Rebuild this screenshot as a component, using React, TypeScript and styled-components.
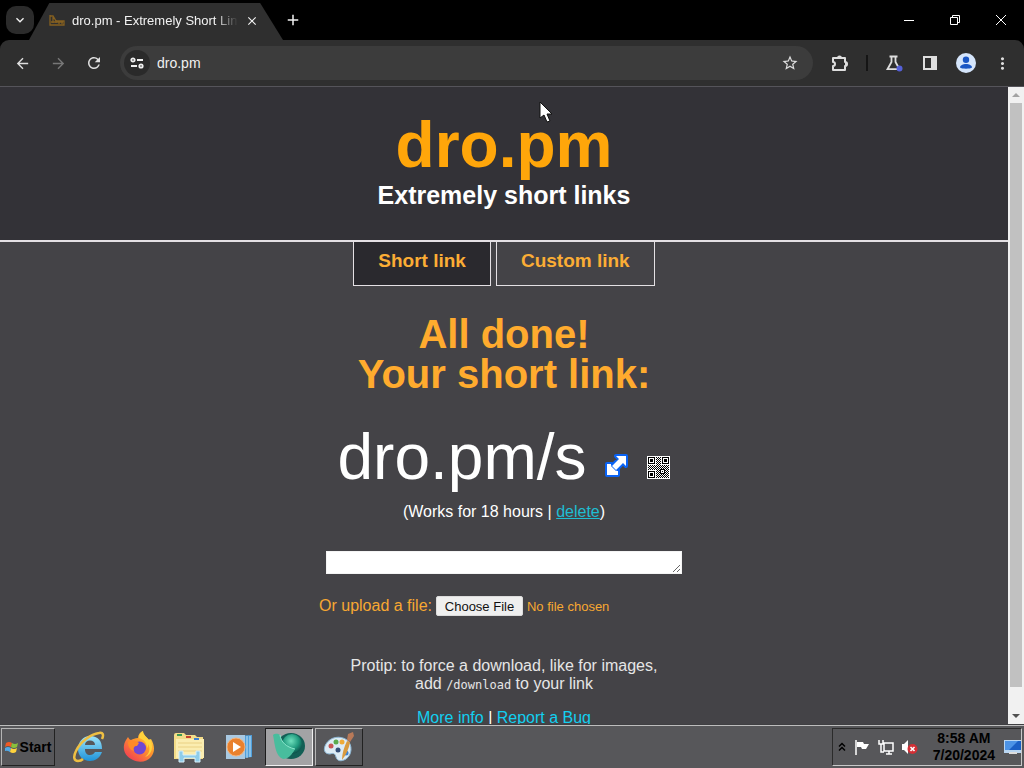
import React from "react";
import styled, { createGlobalStyle } from "styled-components";
import {
  MdAdd,
  MdArrowBack,
  MdArrowForward,
  MdClose,
  MdExpandMore,
  MdMoreVert,
  MdRefresh,
  MdStarBorder,
} from "react-icons/md";

const GlobalStyle = createGlobalStyle`
  * { box-sizing: border-box; }
  body {
    margin: 0;
    background: #444347;
    font-family: "Liberation Sans", Arial, sans-serif;
  }
  h1, h2, p { margin: 0; }
  button { font: inherit; padding: 0; border: 0; background: none; color: inherit; }
  svg { display: block; flex: none; }
`;

const Screen = styled.div`
  display: flex;
  flex-direction: column;
  height: 100vh;
  min-width: 720px;
  overflow: hidden;
`;

/* ---------- browser frame ---------- */

const TabStrip = styled.header`
  display: flex;
  align-items: center;
  flex: none;
  height: 40px;
  padding-left: 6px;
  background: #000;
  color: #f2f2f2;
`;

const TabSearch = styled.button`
  display: grid;
  place-items: center;
  width: 28px;
  height: 28px;
  border-radius: 10px;
  background: #2b2b2b;
`;

const BrowserTab = styled.div`
  display: flex;
  align-items: center;
  width: 254px;
  height: 37px;
  margin: 3px 0 0 -5px;
  padding: 0 17px 2px 20px;
  background: #2f2f2f;
  clip-path: polygon(8% 0, 91% 0, 100% 100%, 0 100%);
`;

const TabTitle = styled.span`
  flex: 1;
  min-width: 0;
  margin-left: 7px;
  overflow: hidden;
  font-size: 13px;
  line-height: 18px;
  white-space: nowrap;
  mask-image: linear-gradient(90deg, #000 86%, transparent);
`;

const IconButton = styled.button<{ $size?: number }>`
  display: grid;
  place-items: center;
  flex: none;
  width: ${(p) => p.$size ?? 36}px;
  height: ${(p) => p.$size ?? 36}px;

  &:disabled { color: #777; }
`;

const WindowControls = styled.div`
  display: flex;
  align-items: center;
  margin-left: auto;
`;

const WindowButton = styled.button`
  display: grid;
  place-items: center;
  width: 46px;
  height: 40px;
`;

const ToolbarBack = styled.div`
  flex: none;
  background: #000;
`;

const Toolbar = styled.nav`
  display: flex;
  align-items: center;
  height: 47px;
  padding: 0 4px;
  border-bottom: 1px solid #55545a;
  border-radius: 9px 9px 0 0;
  background: #2f2f2f;
  color: #dedede;
`;

const AddressBar = styled.div`
  display: flex;
  align-items: center;
  flex: 1;
  height: 34px;
  margin: 0 9px 0 8px;
  padding: 0 5px 0 4px;
  border-radius: 17px;
  background: #3c3c3c;
`;

const SiteBadge = styled.button`
  display: grid;
  place-items: center;
  width: 26px;
  height: 26px;
  border-radius: 13px;
  background: #2a2a2a;
`;

const AddressInput = styled.input`
  flex: 1;
  min-width: 0;
  padding: 0 0 0 7px;
  border: 0;
  outline: 0;
  background: none;
  color: #f0f0f0;
  font-family: inherit;
  font-size: 14px;
`;

const Divider = styled.span`
  width: 2px;
  height: 16px;
  margin: 0 8px;
  background: #151515;
`;

/* ---------- web page ---------- */

const Viewport = styled.div`
  display: flex;
  flex: 1;
  min-height: 0;
`;

const Page = styled.main`
  flex: 1;
  min-width: 0;
  overflow: hidden;
  background: #444347;
  color: #fff;
  font-size: 16px;
  line-height: 18px;
  text-align: center;
`;

const Banner = styled.div`
  padding: 22px 0 31px;
  border-bottom: 2px solid #e4e0e4;
  background: #333237;
`;

const SiteName = styled.h1`
  color: #ffa60a;
  font-size: 64px;
  line-height: 72px;
`;

const Tagline = styled.p`
  font-size: 25px;
  font-weight: bold;
  line-height: 28px;
`;

const Tabs = styled.nav`
  display: flex;
  justify-content: center;
  gap: 5px;
`;

const TabLink = styled.a<{ $active?: boolean }>`
  padding: 8px 24px 13px;
  border: 1px solid #e4e0e4;
  border-top: 0;
  background: ${(p) => (p.$active ? "#2a292e" : "transparent")};
  color: #fbad35;
  font-size: 19px;
  font-weight: bold;
  line-height: 22px;
  text-decoration: none;
`;

const DoneHeading = styled.h2`
  margin-top: 28px;
  color: #ffab2e;
  font-size: 40px;
  line-height: 40px;
`;

const LinkRow = styled.div`
  display: flex;
  align-items: baseline;
  justify-content: center;
  gap: 18px;
  margin-top: 27px;
`;

const ShortLink = styled.span`
  font-size: 64px;
  line-height: 72px;
`;

const Lifetime = styled.p`
  margin-top: 10px;
`;

const TextLink = styled.a<{ $dim?: boolean }>`
  color: ${(p) => (p.$dim ? "#1fbdd2" : "#12cff0")};
`;

const LinkBox = styled.textarea`
  display: block;
  width: 356px;
  height: 23px;
  margin: 30px auto 0;
  padding: 2px;
  border: 1px solid #f4f4f4;
  background: #fff;
  resize: both;
`;

const UploadRow = styled.div`
  display: flex;
  align-items: center;
  justify-content: center;
  gap: 4px;
  height: 20px;
  margin-top: 22px;
  color: #f7a832;
`;

const FileInput = styled.input`
  width: 253px;
  color: inherit;
  font-family: inherit;
  font-size: 13px;

  &::file-selector-button {
    width: 87px;
    height: 20px;
    margin: 0 4px 0 0;
    padding: 0;
    border: 1px solid #dcdcdc;
    border-radius: 2px;
    background: #efefef;
    color: #111;
    font-family: inherit;
    font-size: 13px;
  }
`;

const Protip = styled.p`
  margin-top: 41px;
  color: #e6e6e6;

  code {
    font-family: "DejaVu Sans Mono", monospace;
    font-size: 12px;
    line-height: 12px;
  }
`;

const FooterLinks = styled.p`
  margin-top: 16px;
`;

const ScrollBar = styled.div`
  display: flex;
  flex-direction: column;
  align-items: center;
  width: 16px;
  background: #f1f1f1;
`;

const ScrollArrow = styled.button`
  display: grid;
  place-items: center;
  width: 16px;
  height: 16px;
`;

const ScrollThumb = styled.div`
  flex: 1;
  width: 12px;
  margin-bottom: 21px;
  background: #c1c1c1;
`;

/* ---------- taskbar ---------- */

const Taskbar = styled.footer`
  display: flex;
  align-items: center;
  flex: none;
  height: 44px;
  padding: 0 2px 0 1px;
  border-top: 1px solid #3f3f42;
  box-shadow: inset 0 1px #bdbdbd;
  background: #57575a;
  color: #000;
  font-size: 14px;
  font-weight: bold;
`;

const StartButton = styled.button`
  display: flex;
  align-items: center;
  justify-content: center;
  gap: 1px;
  width: 54px;
  height: 38px;
  margin-right: 10px;
  border: 1px solid;
  border-color: #b5b5b5 #222 #222 #b5b5b5;
`;

const TaskButton = styled.button<{ $state?: "active" | "open" }>`
  display: grid;
  place-items: center;
  width: 48px;
  height: 38px;
  margin-right: 2px;
  border: 1px solid;
  border-color: ${(p) =>
    p.$state === "active"
      ? "#1c1c1c #efefef #efefef #1c1c1c"
      : p.$state === "open"
        ? "#b5b5b5 #222 #222 #b5b5b5"
        : "transparent"};
  background: ${(p) => (p.$state === "active" ? "#a3a3a5" : "transparent")};
`;

const Tray = styled.div`
  display: flex;
  align-items: center;
  gap: 8px;
  height: 38px;
  margin-left: auto;
  padding-left: 5px;
  border: 1px solid;
  border-color: #2b2b2b #c8c8c8 #c8c8c8 #2b2b2b;
`;

const Clock = styled.time`
  margin: 0 1px 0 7px;
  line-height: 17px;
  text-align: center;
`;

const Cursor = styled.svg`
  position: absolute;
  top: 101px;
  left: 539px;
`;

/* ---------- drawings ---------- */

const Favicon = () => (
  <svg width="16" height="14" viewBox="0 0 16 14" fill="none" stroke="#856020" strokeWidth="1.3">
    <path d="M1 1v10h14V7H7L4 2H1M2 8h12M4 3v6M7 6v3M10 7v3M13 7v3" />
  </svg>
);

const TuneIcon = () => (
  <svg width="14" height="12" viewBox="0 0 14 12" fill="none" stroke="#f0f0f0" strokeWidth="1.8">
    <circle cx="3" cy="3" r="1.7" />
    <path d="M7 3h6M1 9h6" />
    <circle cx="11" cy="9" r="1.7" />
  </svg>
);

const ExtensionIcon = () => (
  <svg width="18" height="18" viewBox="0 0 18 18">
    <path
      d="M2 4h12v4a2 2 0 0 1 0 4v4H2v-4a2 2 0 0 0 0-4z"
      fill="none"
      stroke="#dedede"
      strokeWidth="2"
      strokeLinejoin="round"
    />
    <path d="M6 4a2.500 2.500 0 0 1 5 0zM14 7.500a2.500 2.500 0 0 1 0 5z" fill="#dedede" />
  </svg>
);

const FlaskIcon = () => (
  <svg width="18" height="18" viewBox="0 0 18 18" fill="none">
    <path d="M4.500 2.500h8M6.500 3v5L2.500 15.200h12L10.500 8V3" stroke="#dedede" strokeWidth="1.8" />
    <circle cx="14.500" cy="14.500" r="3" fill="#5560d8" />
  </svg>
);

const SidePanelIcon = () => (
  <svg width="14" height="14" viewBox="0 0 14 14">
    <path d="M1 1h12v12H1z" fill="none" stroke="#dedede" strokeWidth="2" />
    <path d="M8 1h5v12H8z" fill="#dedede" />
  </svg>
);

const ProfileIcon = () => (
  <svg width="20" height="20" viewBox="0 0 20 20">
    <circle cx="10" cy="10" r="10" fill="#d5e5fb" />
    <circle cx="10" cy="6.800" r="3.200" fill="#1a56c4" />
    <path d="M4 14.500c0-2.300 3-3.500 6-3.500s6 1.200 6 3.500c-1.500 1.600-10.500 1.600-12 0z" fill="#1a56c4" />
  </svg>
);

const OpenLinkIcon = () => (
  <svg width="25" height="26" viewBox="0 0 25 26">
    <g stroke="#0a63f5" strokeWidth="4" strokeLinejoin="round" fill="#0a63f5">
      <path d="M12 3h10v10l-3-3-7 7-4-4 7-7z" />
      <path d="M3 11h5l6 6v5H3z" />
    </g>
    <path d="M3 11h4v3l4 4h3v4H3z" fill="#fff" />
    <path d="M3 11h3l8 8v3H3z" fill="#fff" />
    <path
      d="M12 3h10v10l-3-3-7 7-4-4 7-7z"
      fill="#fff"
      stroke="#0a63f5"
      strokeWidth="1.500"
      paintOrder="stroke"
    />
  </svg>
);

const FINDERS = [
  [1, 1],
  [15, 1],
  [1, 15],
];

const QrIcon = () => (
  <svg width="23" height="23" viewBox="0 0 23 23" shapeRendering="crispEdges">
    <defs>
      <pattern id="modules" width="2" height="2" patternUnits="userSpaceOnUse">
        <path d="M0 0h1v1H0zM1 1h1v1H1z" fill="#000" />
      </pattern>
    </defs>
    <path d="M0 0h23v23H0z" fill="#fff" />
    <path d="M9 1h5v8h8v13H9v-8H1V9h8z" fill="url(#modules)" />
    {FINDERS.map(([x, y]) => (
      <g key={`${x}-${y}`} transform={`translate(${x} ${y})`}>
        <path d="M0 0h7v7H0z" />
        <path d="M1 1h5v5H1z" fill="#fff" />
        <path d="M2 2h3v3H2z" />
      </g>
    ))}
    <path d="M13 13h5v5h-5z" />
    <path d="M14 14h3v3h-3z" fill="#fff" />
    <path d="M15 15h1v1h-1z" />
  </svg>
);

const FlagLogo = () => (
  <svg width="14" height="14" viewBox="0 0 14 14">
    <path d="M1 3q3-2 6 0L6 7Q3 5 0 7z" fill="#ef5a24" />
    <path d="M7 3q3 2 6 0l-1 4q-3 2-6 0z" fill="#89c13c" />
    <path d="M0 8q3-2 6 0l-1 4q-3-2-5-1z" fill="#53a9e5" />
    <path d="M6 8q3 2 6 0l-1 4q-3 2-6 0z" fill="#ffd23c" />
  </svg>
);

const ExplorerIcon = () => (
  <svg width="32" height="32" viewBox="0 0 32 32" fill="none">
    <defs>
      <linearGradient id="ie" x1="0" y1="0" x2="0" y2="1">
        <stop offset="0" stopColor="#9be4fb" />
        <stop offset="1" stopColor="#1e93d8" />
      </linearGradient>
    </defs>
    <path
      d="M29 18H12c0 4 2 6 5 6 2 0 4-1 5-3h7c-2 6-7 9-12 9C10 30 5 25 5 18S10 5 17 5c8 0 12 5 12 13zM12 14h10c0-3-2-4.500-5-4.500S12 11 12 14z"
      fill="url(#ie)"
      fillRule="evenodd"
    />
    <path d="M29 8c2-4 1-7-3-6C18 3 7 11 3 20c-3 6-2 10 2 10 2 0 4-1 5-2" stroke="#eebf43" strokeWidth="2.500" />
  </svg>
);

const FirefoxIcon = () => (
  <svg width="32" height="32" viewBox="0 0 32 32">
    <defs>
      <linearGradient id="fox" x1="1" y1="0" x2="0.2" y2="1">
        <stop offset="0" stopColor="#ffe84a" />
        <stop offset="0.45" stopColor="#ff9a2b" />
        <stop offset="1" stopColor="#f23a55" />
      </linearGradient>
    </defs>
    <path
      d="M5 6c1 2 2 3 3 3 2-1 4-2 7-2 0-3 2-6 5-7 0 4 4 6 6 9l2-1c4 7 4 13 0 18-4 5-12 6-18 3C0 25-1 15 3 9z"
      fill="url(#fox)"
    />
    <circle cx="16.500" cy="17" r="6.500" fill="#7047d3" />
    <path d="M5 11c4-3 8-1 11 1l-2 3c-3 0-4 2-3 5-4-1-6-4-6-9z" fill="#ff8a26" />
    <path d="M16 7c4 1 8 4 8 10 1-1 1-2 1-4 3 5 1 10-3 13 7-2 9-11 5-18l-1 1c-2-3-6-5-6-9-3 2-4 4-4 7z" fill="#ffd23c" />
  </svg>
);

const FolderIcon = () => (
  <svg width="34" height="32" viewBox="0 0 34 32">
    <path d="M2 4q0-2 2-2h8l2 2h9l2 2h6v22H2z" fill="#f3dc88" />
    <path d="M4 8h28v19H4z" fill="#fbedb0" />
    <path d="M6 12h24M6 16h24M6 20h24" stroke="#ead184" />
    <path d="M5 4h5" stroke="#3c9a54" strokeWidth="2" />
    <path d="M14 6h5" stroke="#c9432f" strokeWidth="2" />
    <path d="M22 8h5" stroke="#3d7fd0" strokeWidth="2" />
    <path d="M7 20h4v4h13v-4h4v11h-5v-4H12v4H7z" fill="#8fcdea" stroke="#d7effa" />
  </svg>
);

const PlayerIcon = () => (
  <svg width="28" height="26" viewBox="0 0 28 26">
    <path d="M10 2l17-1v22l-17 2z" fill="#4f9fdb" />
    <path d="M22 2v22M25 2v21" stroke="#c4e3f6" />
    <path d="M1 1h19v24H1z" fill="#a9c9e2" />
    <circle cx="11" cy="13" r="9" fill="#e9812e" stroke="#f6b37a" />
    <path d="M8 8l8 5-8 5z" fill="#fff" />
  </svg>
);

const SphereIcon = () => (
  <svg width="34" height="30" viewBox="0 0 34 30">
    <defs>
      <radialGradient id="sphere" cx="0.45" cy="0.35" r="0.65">
        <stop offset="0" stopColor="#6fe0bd" />
        <stop offset="0.6" stopColor="#209a7e" />
        <stop offset="1" stopColor="#0b4f48" />
      </radialGradient>
    </defs>
    <ellipse cx="19" cy="14" rx="14" ry="13" fill="#125f55" />
    <circle cx="20" cy="12" r="10" fill="url(#sphere)" />
    <path d="M1 3c3-2 5-1 7 0 1 7 6 12 15 14-3 6-7 10-12 10C3 24 3 12 1 3z" fill="#48bd9d" />
    <path d="M8 3c1 7 6 12 15 14" stroke="#8be8cd" fill="none" />
  </svg>
);

const PaintIcon = () => (
  <svg width="32" height="32" viewBox="0 0 32 32">
    <path
      d="M3 13C7 6 17 4 24 9c6 5 5 15-1 19-5 3-9 2-10-2s-3-4-6-3c-6 0-7-5-4-10z"
      fill="#dcecf6"
      stroke="#8eb8d6"
    />
    <circle cx="8" cy="15" r="2.500" fill="#c75656" />
    <circle cx="13" cy="11" r="2.500" fill="#5bab4f" />
    <circle cx="19" cy="11" r="2.500" fill="#efaa36" />
    <circle cx="15" cy="19" r="2.500" fill="#344f78" />
    <circle cx="23" cy="22" r="2.500" fill="#3d83d0" />
    <path d="M19 29c0-6 2-13 5-19l3 1c-1 7-4 13-8 18z" fill="#d99a3e" />
    <path d="M24 9l1-6 5-2 1 4-4 6z" fill="#b87958" />
  </svg>
);

const ChevronsIcon = () => (
  <svg width="8" height="10" viewBox="0 0 8 10" fill="none" stroke="#000" strokeWidth="1.500">
    <path d="M1 4.500l3-3 3 3M1 8.500l3-3 3 3" />
  </svg>
);

const FlagIcon = () => (
  <svg width="16" height="16" viewBox="0 0 16 16">
    <path d="M2 1v15" stroke="#fff" strokeWidth="1.500" />
    <path d="M3 3h6l1 2h5l-3 5H8L7 8H3z" fill="#fff" />
  </svg>
);

const NetworkIcon = () => (
  <svg width="16" height="16" viewBox="0 0 16 16" fill="none" stroke="#fff" strokeWidth="1.500">
    <path d="M6 4h9v8H6zM8 15h6M11 12v3M1 1v4h4V1M3 5v8h3" />
  </svg>
);

const MutedIcon = () => (
  <svg width="16" height="16" viewBox="0 0 16 16">
    <path d="M0 5h2l4-4v14l-4-4H0z" fill="#fff" />
    <circle cx="10.500" cy="10" r="5" fill="#d32f35" />
    <path d="M8.500 8l4 4m0-4l-4 4" stroke="#fff" strokeWidth="1.600" />
  </svg>
);

const DesktopIcon = () => (
  <svg width="17" height="14" viewBox="0 0 17 14">
    <path d="M0 0h17v13H0z" fill="#b9d6f2" />
    <path d="M1 1h16v9H1z" fill="#1b5fc4" />
    <path d="M1 1h13L5 10H1z" fill="#4c93e6" />
    <path d="M5 12h8v2H5z" fill="#ddd" />
  </svg>
);

export default function App() {
  return (
    <>
      <GlobalStyle />
      <Screen>
        <TabStrip>
          <TabSearch aria-label="Search tabs">
            <MdExpandMore size={16} />
          </TabSearch>
          <BrowserTab>
            <Favicon />
            <TabTitle>dro.pm - Extremely Short Links</TabTitle>
            <IconButton $size={28} aria-label="Close tab">
              <MdClose size={14} />
            </IconButton>
          </BrowserTab>
          <IconButton $size={20} aria-label="New tab">
            <MdAdd size={18} />
          </IconButton>
          <WindowControls>
            <WindowButton aria-label="Minimize">
              <svg width="10" height="10" viewBox="0 0 10 10" stroke="#fff">
                <path d="M0 5.500h10" />
              </svg>
            </WindowButton>
            <WindowButton aria-label="Restore">
              <svg width="10" height="10" viewBox="0 0 10 10" fill="none" stroke="#fff">
                <path d="M.5 2.500h7v7h-7zM2.500 2.500v-2h7v7h-2" />
              </svg>
            </WindowButton>
            <WindowButton aria-label="Close">
              <svg width="10" height="10" viewBox="0 0 10 10" stroke="#fff">
                <path d="M0 0l10 10M10 0L0 10" />
              </svg>
            </WindowButton>
          </WindowControls>
        </TabStrip>

        <ToolbarBack>
          <Toolbar>
            <IconButton aria-label="Back">
              <MdArrowBack size={17} />
            </IconButton>
            <IconButton aria-label="Forward" disabled>
              <MdArrowForward size={17} />
            </IconButton>
            <IconButton aria-label="Reload">
              <MdRefresh size={18} />
            </IconButton>
            <AddressBar>
              <SiteBadge aria-label="Site information">
                <TuneIcon />
              </SiteBadge>
              <AddressInput aria-label="Address" defaultValue="dro.pm" />
              <IconButton aria-label="Bookmark">
                <MdStarBorder size={18} />
              </IconButton>
            </AddressBar>
            <IconButton aria-label="Extensions">
              <ExtensionIcon />
            </IconButton>
            <Divider />
            <IconButton aria-label="Experiments">
              <FlaskIcon />
            </IconButton>
            <IconButton aria-label="Side panel">
              <SidePanelIcon />
            </IconButton>
            <IconButton aria-label="Profile">
              <ProfileIcon />
            </IconButton>
            <IconButton aria-label="Menu">
              <MdMoreVert size={19} />
            </IconButton>
          </Toolbar>
        </ToolbarBack>

        <Viewport>
          <Page>
            <Banner>
              <SiteName>dro.pm</SiteName>
              <Tagline>Extremely short links</Tagline>
            </Banner>
            <Tabs>
              <TabLink href="#short" $active>
                Short link
              </TabLink>
              <TabLink href="#custom">Custom link</TabLink>
            </Tabs>
            <DoneHeading>
              All done!
              <br />
              Your short link:
            </DoneHeading>
            <LinkRow>
              <ShortLink>dro.pm/s</ShortLink>
              <a href="#open" aria-label="Open link">
                <OpenLinkIcon />
              </a>
              <a href="#qr" aria-label="QR code">
                <QrIcon />
              </a>
            </LinkRow>
            <Lifetime>
              (Works for 18 hours |{" "}
              <TextLink href="#delete" $dim>
                delete
              </TextLink>
              )
            </Lifetime>
            <LinkBox aria-label="Link or text" />
            <UploadRow>
              <label htmlFor="upload">Or upload a file:</label>
              <FileInput id="upload" type="file" />
            </UploadRow>
            <Protip>
              Protip: to force a download, like for images,
              <br />
              add <code>/download</code> to your link
            </Protip>
            <FooterLinks>
              <TextLink href="#info">More info</TextLink> | <TextLink href="#bug">Report a Bug</TextLink>
            </FooterLinks>
          </Page>
          <ScrollBar>
            <ScrollArrow aria-label="Scroll up">
              <svg width="8" height="4" viewBox="0 0 8 4">
                <path d="M0 4l4-4 4 4z" fill="#a3a3a3" />
              </svg>
            </ScrollArrow>
            <ScrollThumb />
            <ScrollArrow aria-label="Scroll down">
              <svg width="8" height="4" viewBox="0 0 8 4">
                <path d="M0 0l4 4 4-4z" fill="#505050" />
              </svg>
            </ScrollArrow>
          </ScrollBar>
        </Viewport>

        <Taskbar>
          <StartButton>
            <FlagLogo />
            Start
          </StartButton>
          <TaskButton aria-label="Internet Explorer">
            <ExplorerIcon />
          </TaskButton>
          <TaskButton aria-label="Firefox">
            <FirefoxIcon />
          </TaskButton>
          <TaskButton aria-label="File Explorer">
            <FolderIcon />
          </TaskButton>
          <TaskButton aria-label="Media Player">
            <PlayerIcon />
          </TaskButton>
          <TaskButton aria-label="Browser" $state="active">
            <SphereIcon />
          </TaskButton>
          <TaskButton aria-label="Paint" $state="open">
            <PaintIcon />
          </TaskButton>
          <Tray>
            <ChevronsIcon />
            <FlagIcon />
            <NetworkIcon />
            <MutedIcon />
            <Clock>
              8:58 AM
              <br />
              7/20/2024
            </Clock>
            <DesktopIcon />
          </Tray>
        </Taskbar>
      </Screen>
      <Cursor width="13" height="22" viewBox="0 0 13 22">
        <path d="M1 1v16l4-3 3 7 3-1-3-7h5z" fill="#fff" stroke="#111" />
      </Cursor>
    </>
  );
}
